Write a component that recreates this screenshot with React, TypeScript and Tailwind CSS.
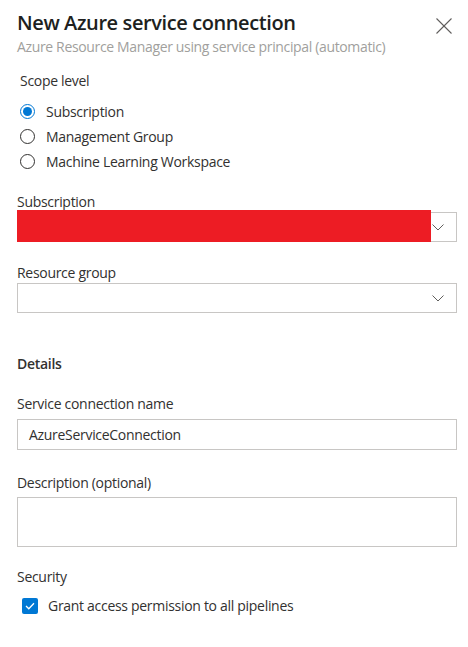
import React from 'react';

const font = { fontFamily: '"Open Sans", "Noto Sans", sans-serif' };

const Chevron = () => (
  <svg width="12" height="7" viewBox="0 0 12 7" fill="none" stroke="#605e5c" strokeWidth="1">
    <polyline points="0.5,0.5 6,6 11.5,0.5" />
  </svg>
);

const Radio = ({ checked, label }: { checked?: boolean; label: string }) => (
  <div className="flex items-center h-[25px] pl-[3px]">
    {checked ? (
      <span className="w-[15px] h-[15px] rounded-full border-[1.5px] border-[#0078d4] flex items-center justify-center">
        <span className="w-[9px] h-[9px] rounded-full bg-[#0078d4]" />
      </span>
    ) : (
      <span className="w-[15px] h-[15px] rounded-full border border-[#323130]" />
    )}
    <span className="ml-[11px] text-[14px] leading-[20px] tracking-[-0.3px] text-[#323130]">{label}</span>
  </div>
);

const Dropdown = ({ redacted }: { redacted?: boolean }) => (
  <div className="relative">
    <div className="h-[30px] border border-[#c8c6c4] bg-white flex items-center justify-end pr-[12px]">
      <Chevron />
    </div>
    {redacted && <div className="absolute left-0 top-[-2px] w-[414px] h-[32px] bg-[#ed1c24]" />}
  </div>
);

export default function App() {
  return (
    <div
      className="w-[468px] h-[647px] bg-white pl-[17px] pr-[11px] text-[#323130] text-[14px] leading-[20px] tracking-[-0.3px]"
      style={font}
    >
      {/* Header */}
      <div className="relative pt-[9px]">
        <h1 className="text-[20px] leading-[28px] font-semibold tracking-[-0.4px] text-[#201f1e]">
          New Azure service connection
        </h1>
        <p className="text-[14px] leading-[20px] tracking-[-0.35px] text-[#a19f9d]">
          Azure Resource Manager using service principal (automatic)
        </p>
        <button className="absolute right-[5px] top-[18px] w-[16px] h-[16px]">
          <svg width="16" height="16" viewBox="0 0 16 16" stroke="#605e5c" strokeWidth="1.1">
            <line x1="0.5" y1="0.5" x2="15.5" y2="15.5" />
            <line x1="15.5" y1="0.5" x2="0.5" y2="15.5" />
          </svg>
        </button>
      </div>

      {/* Scope */}
      <div className="mt-[14px] pl-[3px]">Scope level</div>
      <div className="mt-[8px] flex flex-col">
        <Radio checked label="Subscription" />
        <Radio label="Management Group" />
        <Radio label="Machine Learning Workspace" />
      </div>

      <div className="mt-[18px]">Subscription</div>
      <Dropdown redacted />

      <div className="mt-[21px]">Resource group</div>
      <Dropdown />

      {/* Details */}
      <div className="mt-[41px] font-semibold">Details</div>

      <div className="mt-[20px]">Service connection name</div>
      <div className="mt-[5px] h-[31px] border border-[#c8c6c4] flex items-center pl-[11px]">
        AzureServiceConnection
      </div>

      <div className="mt-[23px]">Description (optional)</div>
      <div className="mt-[4px] h-[50px] border border-[#c8c6c4]" />

      <div className="mt-[20px]">Security</div>
      <div className="mt-[9px] flex items-center h-[20px] pl-[5px]">
        <span className="w-[16px] h-[16px] rounded-[2px] bg-[#0078d4] flex items-center justify-center">
          <svg width="10" height="8" viewBox="0 0 10 8" fill="none" stroke="white" strokeWidth="1.3">
            <polyline points="1,4 3.8,6.8 9,1.2" />
          </svg>
        </span>
        <span className="ml-[10px]">Grant access permission to all pipelines</span>
      </div>
    </div>
  );
}
